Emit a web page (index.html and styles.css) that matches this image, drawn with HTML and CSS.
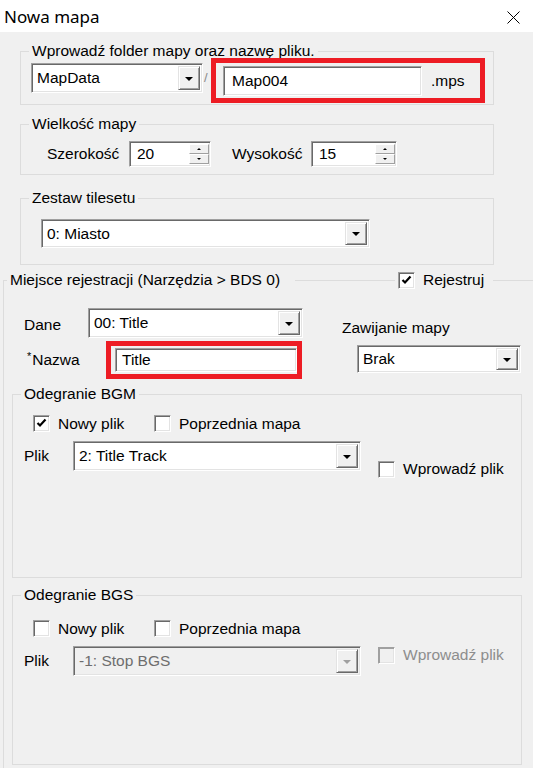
FILE: index.html
```html
<!DOCTYPE html>
<html lang="pl">
<head>
<meta charset="utf-8">
<title>Nowa mapa</title>
<link rel="stylesheet" href="styles.css">
</head>
<body>
<header class="titlebar">
  <span class="title">Nowa mapa</span>
  <svg class="close" width="13" height="13" viewBox="0 0 13 13"><path d="M0.5 0.5L12.5 12.5M12.5 0.5L0.5 12.5" stroke="#000" stroke-width="1" fill="none"/></svg>
</header>

<section class="group g-file">
  <div class="legend">Wprowadź folder mapy oraz nazwę pliku.</div>
  <div class="file-row">
    <div class="combo c-folder"><span class="val">MapData</span><span class="dd"><i class="tri"></i></span></div>
    <span class="slash">/</span>
    <div class="hl hl-file">
      <div class="field f-name"><span class="val">Map004</span></div>
      <span class="ext">.mps</span>
    </div>
  </div>
</section>

<section class="group g-size">
  <div class="legend">Wielkość mapy</div>
  <div class="size-row">
    <span class="lbl l-w">Szerokość</span>
    <div class="spin s-w"><span class="val">20</span><span class="arrows"><span class="ar up"><i class="tri-up"></i></span><span class="ar dn"><i class="tri-dn"></i></span></span></div>
    <span class="lbl l-h">Wysokość</span>
    <div class="spin s-h"><span class="val">15</span><span class="arrows"><span class="ar up"><i class="tri-up"></i></span><span class="ar dn"><i class="tri-dn"></i></span></span></div>
  </div>
</section>

<section class="group g-tiles">
  <div class="legend">Zestaw tilesetu</div>
  <div class="combo c-tiles"><span class="val">0: Miasto</span><span class="dd"><i class="tri"></i></span></div>
</section>

<section class="group g-reg">
  <div class="legend-row">
    <span class="legend-item reg-title">Miejsce rejestracji (Narzędzia &gt; BDS 0)</span>
    <span class="legend-item reg-check">
      <span class="cb"><svg viewBox="0 0 13 13" width="13" height="13"><path d="M2.5 6l2.5 2.5 5.5-6" stroke="#000" stroke-width="2.2" fill="none"/></svg></span>
      <span>Rejestruj</span>
    </span>
  </div>

  <div class="reg-top">
    <div class="reg-left">
      <div class="reg-line">
        <span class="lbl l-dane">Dane</span>
        <div class="combo c-dane"><span class="val">00: Title</span><span class="dd"><i class="tri"></i></span></div>
      </div>
      <div class="reg-line line-name">
        <span class="lbl l-nazwa"><sup class="ast">*</sup>Nazwa</span>
        <div class="hl hl-name">
          <div class="field f-title"><span class="val">Title</span></div>
        </div>
      </div>
    </div>
    <div class="reg-right">
      <span class="lbl l-wrap">Zawijanie mapy</span>
      <div class="combo c-wrap"><span class="val">Brak</span><span class="dd"><i class="tri"></i></span></div>
    </div>
  </div>

  <section class="group g-audio g-bgm">
    <div class="legend">Odegranie BGM</div>
    <div class="check-row">
      <span class="chk c-first"><span class="cb"><svg viewBox="0 0 13 13" width="13" height="13"><path d="M2.5 6l2.5 2.5 5.5-6" stroke="#000" stroke-width="2.2" fill="none"/></svg></span><span>Nowy plik</span></span>
      <span class="chk"><span class="cb"></span><span>Poprzednia mapa</span></span>
    </div>
    <div class="file-line">
      <span class="lbl l-plik">Plik</span>
      <div class="combo c-plik"><span class="val">2: Title Track</span><span class="dd"><i class="tri"></i></span></div>
      <span class="chk c-input c-input-bgm"><span class="cb"></span><span>Wprowadź plik</span></span>
    </div>
  </section>

  <section class="group g-audio g-bgs">
    <div class="legend">Odegranie BGS</div>
    <div class="check-row">
      <span class="chk c-first"><span class="cb"></span><span>Nowy plik</span></span>
      <span class="chk"><span class="cb"></span><span>Poprzednia mapa</span></span>
    </div>
    <div class="file-line">
      <span class="lbl l-plik">Plik</span>
      <div class="combo c-plik disabled"><span class="val">-1: Stop BGS</span><span class="dd"><i class="tri"></i></span></div>
      <span class="chk c-input c-input-bgs disabled"><span class="cb"></span><span>Wprowadź plik</span></span>
    </div>
  </section>
</section>
</body>
</html>
```

FILE: styles.css
```css
* { box-sizing: border-box; }
html, body { margin: 0; padding: 0; }
body {
  width: 533px;
  height: 768px;
  overflow: hidden;
  background: #f0f0f0;
  font-family: "Liberation Sans", Arial, sans-serif;
  font-size: 15.5px;
  color: #000;
}

/* title bar */
.titlebar {
  height: 32px;
  background: #fff;
  display: flex;
  align-items: center;
  justify-content: space-between;
  padding: 0 13px 0 4px;
}
.title {
  font-family: "Noto Sans", "Liberation Sans", sans-serif;
  font-size: 17px;
  color: #000;
}
.close { display: block; margin-top: 2px; }

/* group boxes */
.group {
  border: 1px solid #dcdcdc;
}
.legend,
.legend-item {
  width: max-content;
  height: 18px;
  line-height: 18px;
  padding: 0 3px;
  background: #f0f0f0;
  white-space: nowrap;
}
.legend { margin: -10px 0 -8px 8px; }

.g-file { margin: 19px 0 0 20px; width: 474px; height: 54px; }
.g-size { margin: 19px 0 0 20px; width: 474px; height: 51px; }
.g-tiles { margin: 23px 0 0 20px; width: 474px; height: 67px; }
.g-reg {
  margin: 15px 0 0 3px;
  width: 530px;
  height: 488px;
  border-right: none;
  border-bottom: none;
}

/* sunken field */
.field, .combo, .spin {
  background: #fff;
  border: 1px solid;
  border-color: #a0a0a0 #fff #fff #a0a0a0;
  box-shadow: inset 1px 1px 0 #696969, inset -1px -1px 0 #e3e3e3;
}
.combo {
  display: flex;
  padding: 2px;
}
.combo .val {
  flex: 1;
  padding-left: 3px;
  display: flex;
  align-items: center;
  white-space: nowrap;
}
.dd {
  width: 22px;
  background: #f0f0f0;
  border: 1px solid;
  border-color: #e3e3e3 #696969 #696969 #e3e3e3;
  box-shadow: inset 1px 1px 0 #fff, inset -1px -1px 0 #a0a0a0;
  display: flex;
  align-items: center;
  justify-content: center;
}
.tri {
  width: 0; height: 0;
  border-left: 4px solid transparent;
  border-right: 4px solid transparent;
  border-top: 4px solid #000;
  margin-top: 1px;
}
.combo.disabled { background: #f0f0f0; }
.combo.disabled .val { color: #6d6d6d; }
.combo.disabled .tri { border-top-color: #a0a0a0; }

/* highlight box (red annotation) */
.hl {
  border: 5px solid #ed1c24;
  display: flex;
  align-items: center;
}

/* group 1 */
.file-row { display: flex; align-items: flex-start; margin-top: 6px; padding-left: 10px; }
.c-folder { width: 172px; height: 30px; margin-top: 5px; }
.slash { width: 8px; padding-left: 1px; margin-top: 12px; color: #8a8a8a; font-size: 13px; line-height: 16px; }
.hl-file { width: 274px; height: 45px; padding: 0 0 0 7px; }
.f-name { width: 199px; height: 30px; display: flex; align-items: center; padding-left: 8px; }
.ext { margin-left: 9px; }

/* group 2 */
.size-row { display: flex; align-items: center; margin-top: 16px; padding-left: 26px; height: 26px; }
.lbl { white-space: nowrap; }
.l-w { width: 82px; }
.l-h { width: 79px; margin-left: 21px; }
.spin { display: flex; height: 26px; padding: 2px 1px 2px 2px; }
.s-w { width: 82px; }
.s-h { width: 86px; }
.spin .val { flex: 1; padding-left: 5px; display: flex; align-items: center; }
.arrows { width: 20px; display: flex; flex-direction: column; }
.ar {
  flex: 1;
  background: #f0f0f0;
  border: 1px solid;
  border-color: #fff #a0a0a0 #a0a0a0 #fff;
  display: flex;
  align-items: center;
  justify-content: center;
}
.tri-up, .tri-dn {
  width: 0; height: 0;
  border-left: 2px solid transparent;
  border-right: 2px solid transparent;
}
.tri-up { border-bottom: 2px solid #000; }
.tri-dn { border-top: 2px solid #000; }

/* group 3 */
.c-tiles { width: 329px; height: 29px; margin: 20px 0 0 20px; }

/* registration group */
.legend-row {
  display: flex;
  align-items: center;
  margin: -10px 0 -8px 3px;
  height: 18px;
}
.reg-title { width: 288px; }
.reg-check {
  display: flex;
  align-items: center;
  gap: 8px;
  margin-left: 100px;
  padding: 0 9px 0 3px;
}

.cb {
  width: 17px;
  height: 17px;
  flex: none;
  background: #fff;
  border: 1px solid;
  border-color: #a0a0a0 #fff #fff #a0a0a0;
  box-shadow: inset 1px 1px 0 #696969, inset -1px -1px 0 #e3e3e3;
  display: flex;
  align-items: center;
  justify-content: center;
}
.cb svg { display: block; }

.reg-top { display: flex; align-items: flex-start; margin-top: 27px; }
.reg-left { display: flex; flex-direction: column; }
.reg-line { display: flex; align-items: center; }
.line-name { margin-top: 3px; }
.l-dane { width: 84px; padding-left: 20px; padding-top: 3px; }
.c-dane { width: 215px; height: 30px; }
.l-nazwa { width: 102px; padding-left: 23px; }
.ast { font-size: 11px; vertical-align: 5px; line-height: 0; margin-right: 1px; }
.hl-name { width: 196px; height: 38px; padding-left: 4px; }
.f-title { width: 182px; height: 24px; display: flex; align-items: center; padding-left: 6px; }

.reg-right { display: flex; flex-direction: column; align-items: flex-start; margin-left: 39px; }
.l-wrap { margin-top: 11px; line-height: 18px; }
.c-wrap { width: 164px; height: 28px; margin: 8px 0 0 15px; }

/* audio groups */
.g-audio { width: 510px; margin-left: 8px; }
.g-bgm { margin-top: 15px; height: 184px; }
.g-bgs { margin-top: 17px; height: 170px; }
.check-row { display: flex; align-items: center; padding-left: 20px; height: 17px; }
.g-bgm .check-row { margin-top: 20px; }
.g-bgs .check-row { margin-top: 24px; }
.chk { display: flex; align-items: center; gap: 8px; white-space: nowrap; }
.c-first { width: 121px; }
.file-line { display: flex; align-items: flex-start; margin-top: 9px; }
.l-plik { width: 60px; padding-left: 11px; height: 30px; line-height: 30px; }
.c-plik { width: 288px; height: 30px; }
.c-input { margin-left: 17px; }
.c-input-bgm { margin-top: 19px; }
.c-input-bgs { margin-top: 0; }
.chk.disabled { color: #8d8d8d; }
.chk.disabled .cb { background: #f0f0f0; box-shadow: inset 1px 1px 0 #a0a0a0, inset -1px -1px 0 #e3e3e3; }
```
